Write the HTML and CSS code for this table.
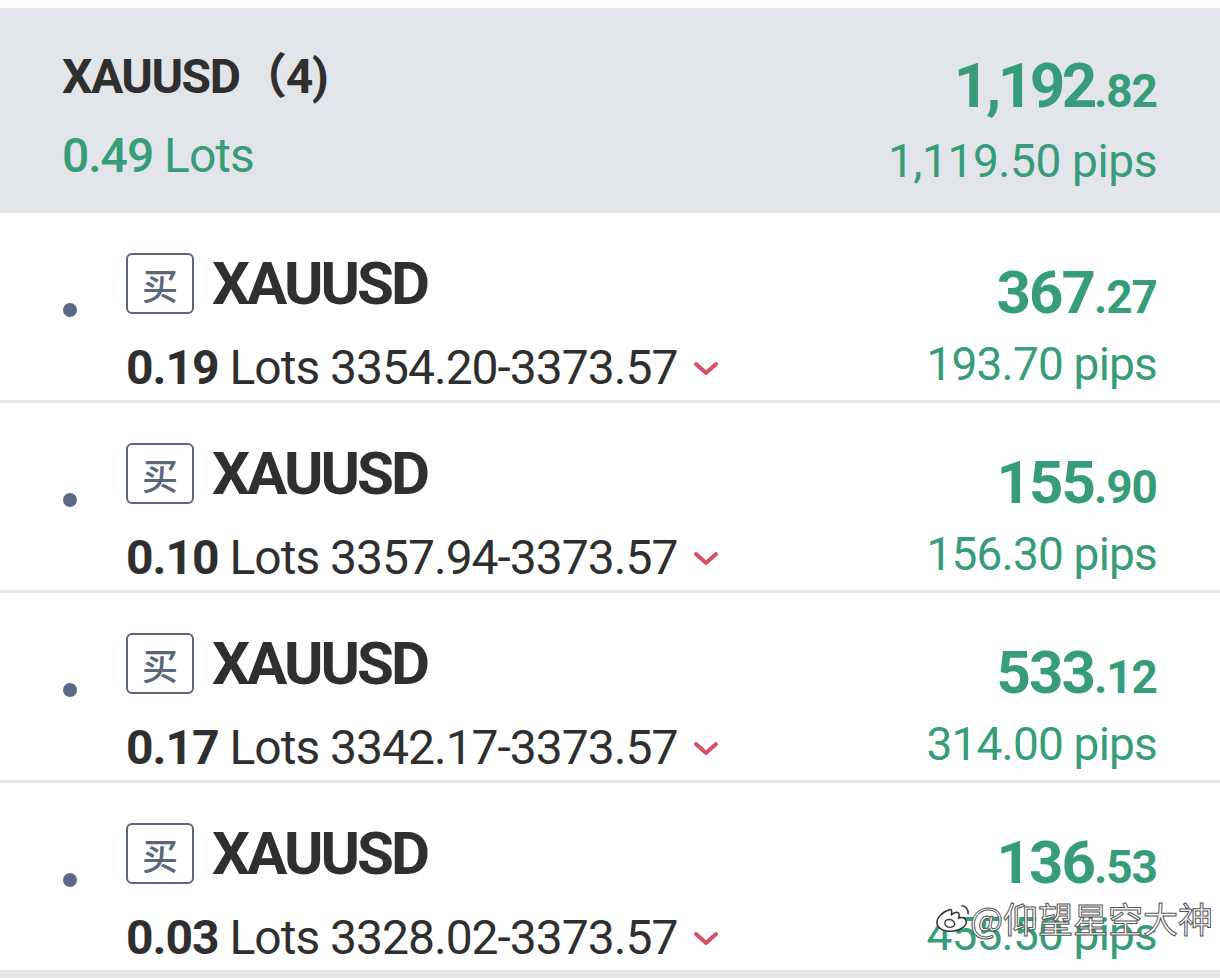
FILE: index.html
```html
<!DOCTYPE html>
<html lang="zh-CN">
<head>
<meta charset="utf-8">
<title>Positions</title>
<link rel="stylesheet" href="styles.css">
</head>
<body>
<div class="page">
  <section class="group">
    <div class="group-left">
      <div class="group-title">XAUUSD（4)</div>
      <div class="group-lots"><span class="num">0.49</span> Lots</div>
    </div>
    <div class="group-right">
      <div class="group-profit">1,192<span class="dec">.82</span></div>
      <div class="group-pips">1,119.50 pips</div>
    </div>
  </section>

  <div class="row">
    <div class="dot-col"><span class="dot"></span></div>
    <div class="main">
      <div class="line1"><span class="badge">买</span><span class="sym">XAUUSD</span></div>
      <div class="line2"><span class="num">0.19</span> Lots 3354.20-3373.57<svg class="chev" viewBox="0 0 26 16" width="26" height="16"><polyline points="3,3 13,12 23,3" fill="none" stroke="#d84f68" stroke-width="4" stroke-linecap="round" stroke-linejoin="round"/></svg></div>
    </div>
    <div class="right">
      <div class="profit">367<span class="dec">.27</span></div>
      <div class="pips">193.70 pips</div>
    </div>
  </div>

  <div class="row">
    <div class="dot-col"><span class="dot"></span></div>
    <div class="main">
      <div class="line1"><span class="badge">买</span><span class="sym">XAUUSD</span></div>
      <div class="line2"><span class="num">0.10</span> Lots 3357.94-3373.57<svg class="chev" viewBox="0 0 26 16" width="26" height="16"><polyline points="3,3 13,12 23,3" fill="none" stroke="#d84f68" stroke-width="4" stroke-linecap="round" stroke-linejoin="round"/></svg></div>
    </div>
    <div class="right">
      <div class="profit">155<span class="dec">.90</span></div>
      <div class="pips">156.30 pips</div>
    </div>
  </div>

  <div class="row">
    <div class="dot-col"><span class="dot"></span></div>
    <div class="main">
      <div class="line1"><span class="badge">买</span><span class="sym">XAUUSD</span></div>
      <div class="line2"><span class="num">0.17</span> Lots 3342.17-3373.57<svg class="chev" viewBox="0 0 26 16" width="26" height="16"><polyline points="3,3 13,12 23,3" fill="none" stroke="#d84f68" stroke-width="4" stroke-linecap="round" stroke-linejoin="round"/></svg></div>
    </div>
    <div class="right">
      <div class="profit">533<span class="dec">.12</span></div>
      <div class="pips">314.00 pips</div>
    </div>
  </div>

  <div class="row">
    <div class="dot-col"><span class="dot"></span></div>
    <div class="main">
      <div class="line1"><span class="badge">买</span><span class="sym">XAUUSD</span></div>
      <div class="line2"><span class="num">0.03</span> Lots 3328.02-3373.57<svg class="chev" viewBox="0 0 26 16" width="26" height="16"><polyline points="3,3 13,12 23,3" fill="none" stroke="#d84f68" stroke-width="4" stroke-linecap="round" stroke-linejoin="round"/></svg></div>
    </div>
    <div class="right">
      <div class="profit">136<span class="dec">.53</span></div>
      <div class="pips">455.50 pips</div>
    </div>
  </div>
  <div class="rest"></div>

  <div class="watermark">
    <svg class="wb-logo" viewBox="0 0 40 34" width="38" height="32"><path d="M17 8 C9 10 2 17 3 23 C4 29 12 32 20 31 C29 30 35 25 34 20 C33 16 29 16 26 17 C27 14 27 11 24 11 C21 11 19 13 18 14 C19 11 19 8 17 8 Z" fill="#fff" stroke="#333" stroke-width="1.6"/><path d="M12 20 C10 23 12 27 17 27 C21 27 23 24 21 21 C19 18 14 18 12 20 Z" fill="#fff" stroke="#333" stroke-width="1.4"/><path d="M29 4 C33 4 37 8 36 13" fill="none" stroke="#333" stroke-width="1.6"/></svg>
    <span class="wm-text">@仰望星空大神</span>
  </div>
</div>
</body>
</html>
```

FILE: styles.css
```css
html, body {
  margin: 0;
  padding: 0;
  background: #ffffff;
}

.page {
  position: relative;
  width: 1220px;
  padding-top: 8px;
  font-family: Roboto, "Noto Sans", "Noto Sans CJK SC", sans-serif;
  color: #2f2f2f;
}

.group {
  height: 205px;
  background: #e2e5e9;
  display: flex;
  justify-content: space-between;
  padding: 0 63px 0 62px;
  box-sizing: border-box;
}

.group-left {
  display: flex;
  flex-direction: column;
  padding-top: 45px;
}

.group-title {
  font-size: 48px;
  line-height: 48px;
  font-weight: 700;
  letter-spacing: -1.5px;
  color: #2f2f2f;
}

.group-lots {
  margin-top: 31px;
  font-size: 48px;
  line-height: 48px;
  color: #379c79;
  letter-spacing: -1px;
}

.group-lots .num {
  font-weight: 500;
}

.group-right {
  display: flex;
  flex-direction: column;
  align-items: flex-end;
  padding-top: 47px;
}

.group-profit {
  font-size: 62px;
  line-height: 62px;
  font-weight: 700;
  color: #379c79;
  letter-spacing: -3.5px;
}

.group-profit .dec, .profit .dec {
  font-size: 46px;
  letter-spacing: -1px;
}

.group-pips {
  margin-top: 16px;
  font-size: 46px;
  line-height: 46px;
  color: #379c79;
  letter-spacing: -0.4px;
}

.row {
  height: 190px;
  box-sizing: border-box;
  border-bottom: 3px solid #e6e6e6;
  display: flex;
}

.dot-col {
  width: 126px;
  padding-left: 63px;
  padding-top: 90px;
  box-sizing: border-box;
  flex: none;
}

.dot {
  display: block;
  width: 14px;
  height: 14px;
  border-radius: 50%;
  background: #5a6a86;
}

.main {
  flex: 1;
  padding-top: 40px;
  display: flex;
  flex-direction: column;
}

.line1 {
  display: flex;
  align-items: center;
  height: 61px;
}

.badge {
  width: 68px;
  height: 61px;
  box-sizing: border-box;
  border: 2px solid #5b6678;
  border-radius: 6px;
  display: flex;
  align-items: center;
  justify-content: center;
  font-family: "Noto Sans CJK SC", sans-serif;
  font-size: 36px;
  font-weight: 500;
  color: #5b6678;
  margin-right: 18px;
}

.sym {
  font-size: 60px;
  line-height: 60px;
  font-weight: 700;
  letter-spacing: -3px;
  color: #2f2f2f;
}

.line2 {
  margin-top: 30px;
  font-size: 48px;
  line-height: 48px;
  letter-spacing: -1px;
  color: #2f2f2f;
  display: flex;
  align-items: center;
  white-space: pre;
}

.line2 .num {
  font-weight: 700;
}

.chev {
  margin-left: 16px;
  margin-top: 2px;
}

.right {
  flex: none;
  padding-right: 63px;
  padding-top: 50px;
  display: flex;
  flex-direction: column;
  align-items: flex-end;
}

.profit {
  font-size: 60px;
  line-height: 60px;
  font-weight: 700;
  color: #379c79;
  letter-spacing: -2px;
}

.pips {
  margin-top: 14px;
  font-size: 46px;
  line-height: 46px;
  color: #379c79;
  letter-spacing: -0.8px;
}

.rest {
  height: 10px;
  background: #e6e6e6;
}

.watermark {
  position: absolute;
  left: 934px;
  top: 898px;
  display: flex;
  align-items: center;
}

.wb-logo {
  margin-right: -2px;
}

.wm-text {
  font-family: "Noto Sans CJK SC", sans-serif;
  font-size: 35px;
  line-height: 40px;
  color: #ffffff;
  -webkit-text-stroke: 1px #555;
  letter-spacing: 0;
}
```
